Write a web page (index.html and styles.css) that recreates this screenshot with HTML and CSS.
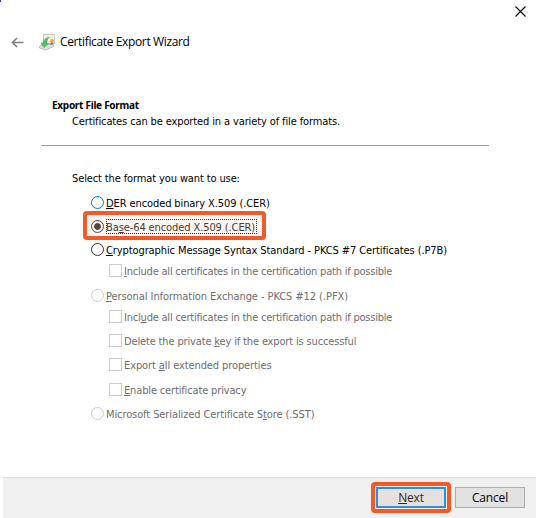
FILE: index.html
```html
<!DOCTYPE html>
<html lang="en">
<head>
<meta charset="utf-8">
<title>Certificate Export Wizard</title>
<link rel="stylesheet" href="styles.css">
</head>
<body>
<main class="wizard">
  <i class="corner"></i>
  <div class="caption">
    <svg class="close" width="11" height="11" viewBox="0 0 11 11"><path d="M.5.5l10 10M10.5.5l-10 10" stroke="#000" stroke-width="1.1" fill="none"/></svg>
  </div>
  <header class="titlebar">
    <svg class="back" width="13" height="11" viewBox="0 0 13 11"><path d="M12.5 5.500H1.500M6 1L1.500 5.500L6 10" stroke="#808080" stroke-width="1.7" fill="none"/></svg>
    <svg class="cert" width="17" height="17" viewBox="0 0 17 17">
      <path d="M4.500.5h11v9h-11z" fill="#f5f1e7" stroke="#c9c5ba"/>
      <path d="M7.500 3h6" stroke="#e3dfd2"/>
      <path d="M.5 12.500l4-2.500 9 .5 1.500 1.500-8 4-6.500-2z" fill="#dfe2e2" stroke="#a3a9aa" stroke-width=".8"/>
      <path d="M10 3.500C6.500 4 4.500 6 4.500 9H2L5 13.500 9.500 9.500H7.300C7.500 7 8.500 5 10 3.500z" fill="#47c957" stroke="#2fa542" stroke-width=".6"/>
      <path d="M12 8l-.5 3 1.500-1 1.500 1L14 8z" fill="#4a79b5"/>
      <circle cx="13" cy="7" r="1.900" fill="#f5a623"/>
    </svg>
    <h1 class="title"><span>Certificate Export Wizard</span></h1>
  </header>
  <section class="heading">
    <h2><span>Export File Format</span></h2>
    <p><span class="t-sub">Certificates can be exported in a variety of file formats.</span></p>
  </section>
  <section class="formats">
    <p class="prompt"><span class="t-prompt">Select the format you want to use:</span></p>
    <div class="option"><i class="radio hot"></i><span class="t-der"><u>D</u>ER encoded binary X.509 (.CER)</span></div>
    <div class="option selected g9"><i class="radio on"></i><span class="t-base">Ba<u>s</u>e-64 encoded X.509 (.CER)</span><b class="focus"></b><b class="mark"></b></div>
    <div class="option g8"><i class="radio"></i><span class="t-p7"><u>C</u>ryptographic Message Syntax Standard - PKCS #7 Certificates (.P7B)</span></div>
    <div class="option sub off g6"><i class="box"></i><span class="t-inc"><u>I</u>nclude all certificates in the certification path if possible</span></div>
    <div class="option off g10"><i class="radio"></i><span class="t-pfx"><u>P</u>ersonal Information Exchange - PKCS #12 (.PFX)</span></div>
    <div class="option sub off g6"><i class="box"></i><span class="t-inc">Incl<u>u</u>de all certificates in the certification path if possible</span></div>
    <div class="option sub off g9"><i class="box"></i><span class="t-del">Delete the private <u>k</u>ey if the export is successful</span></div>
    <div class="option sub off g9"><i class="box"></i><span class="t-ext">Export <u>a</u>ll extended properties</span></div>
    <div class="option sub off g10"><i class="box"></i><span class="t-priv"><u>E</u>nable certificate privacy</span></div>
    <div class="option off g9"><i class="radio"></i><span class="t-sst">Microsoft Serialized Certificate S<u>t</u>ore (.SST)</span></div>
  </section>
  <footer class="actions">
    <button class="btn next"><span><u>N</u>ext</span><b class="mark"></b></button>
    <button class="btn"><span>Cancel</span></button>
  </footer>
</main>
</body>
</html>
```
FILE: styles.css
```css
* { box-sizing: border-box; }
body { margin: 0; background: #fff; color: #000; font: 11px/15px "DejaVu Sans Condensed", "DejaVu Sans", sans-serif; font-stretch: condensed; }
h1, h2, p { margin: 0; font-size: inherit; }
u { text-decoration: underline; text-decoration-thickness: 1px; text-underline-offset: 1px; }
span { white-space: nowrap; }
.wizard { position: relative; height: 518px; display: flex; flex-direction: column; overflow: hidden; }
.corner { position: absolute; left: 0; top: 0; width: 1px; height: 2px; background: #31319c; }
.caption { height: 30px; padding: 6px 10px 0 0; display: flex; justify-content: flex-end; }
.titlebar { height: 24px; padding-left: 11px; display: flex; align-items: center; }
.cert { margin: 0 4px 0 15px; }
.title { font: 400 12px/18px "Open Sans", sans-serif; letter-spacing: -.36px; }
.heading { height: 92px; margin: 0 47px 0 41px; padding: 44px 0 0 11px; border-bottom: 1px solid #a0a0a0; }
.heading h2 { font: 700 10px/15px "Noto Sans", sans-serif; letter-spacing: -.27px; }
.heading p { padding: 1px 0 0 20px; }
.formats { height: 331px; padding: 25px 0 0 91px; }
.prompt { margin: 0 0 9px -19px; }
.option { position: relative; height: 15px; display: flex; align-items: center; gap: 2px; }
.option span { padding-top: 1px; }
.sub { padding-left: 18px; }
.off { color: #6d6d6d; }
.g6 { margin-top: 6px; }
.g8 { margin-top: 8px; }
.g9 { margin-top: 9px; }
.g10 { margin-top: 10px; }
.t-sub, .t-prompt { letter-spacing: -.12px; }
.t-der, .t-base, .t-p7, .t-ext, .t-sst { letter-spacing: -.1px; }
.t-inc { letter-spacing: -.21px; }
.t-pfx { letter-spacing: -.07px; }
.t-del, .t-priv { letter-spacing: -.15px; }
.radio, .box { flex: none; width: 13px; height: 13px; border: 1px solid #333; background: #fff; }
.radio { border-radius: 50%; }
.hot { border-color: #0078d7; }
.on { background: radial-gradient(circle, #4d4542 3px, #fff 3.8px); border-color: #4d4542; }
.off i { border-color: #ccc; }
.selected { color: #403633; }
.focus { position: absolute; left: 15px; top: 0; width: 151px; height: 15px; border: 1px dotted #333; }
.mark { position: absolute; border: 4px solid #f15a29; border-radius: 4px; background: rgba(241, 90, 41, .05); }
.selected .mark { left: -8px; top: -8px; width: 183px; height: 29px; }
.actions { flex: 1; margin-left: 3px; padding: 9px 11px 0 0; border-top: 1px solid #dfdfdf; background: #f0f0f0; display: flex; justify-content: flex-end; gap: 9px; }
.btn { position: relative; width: 70px; height: 21px; padding: 0; border: 1px solid #adadad; background: #e1e1e1; color: #000; font: 12px/18px "Open Sans", sans-serif; letter-spacing: -.15px; }
.next { border: 2px solid #318fd8; background: #e5dfdd; color: #302825; }
.next .mark { left: -7px; top: -7px; width: 80px; height: 31px; background: none; }
```
